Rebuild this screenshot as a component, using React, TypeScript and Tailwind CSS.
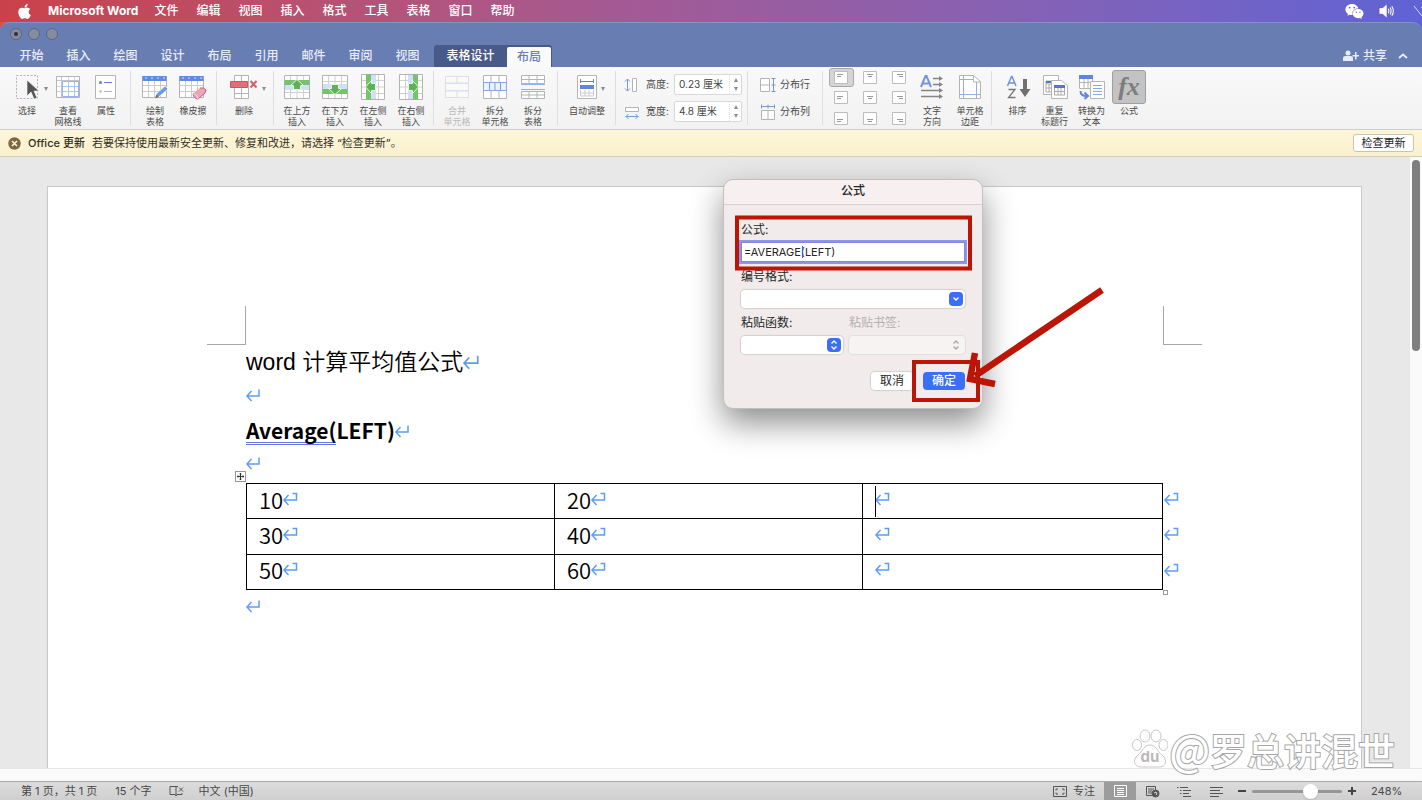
import type { ReactNode } from "react";
import { FaApple, FaWeixin } from "react-icons/fa";

const MENUS = ["文件", "编辑", "视图", "插入", "格式", "工具", "表格", "窗口", "帮助"];
const TABS = ["开始", "插入", "绘图", "设计", "布局", "引用", "邮件", "审阅", "视图"];
const ROWS = [
  ["10", "20", ""],
  ["30", "40", ""],
  ["50", "60", ""],
];

const LINE = "#b4b4b4";
const BLUE = "#7897d8";

/* ---------- Icons ---------- */

function Icon({ children, w = 26, h = 26 }: { children: ReactNode; w?: number; h?: number }) {
  return (
    <svg width={w} height={h} viewBox={`0 0 ${w} ${h}`} fill="none" stroke={LINE} aria-hidden="true">
      {children}
    </svg>
  );
}

function SelectIcon() {
  return (
    <Icon>
      <path d="M2.5 1.5h21v23h-21z" strokeDasharray="2 1.5" />
      <path d="M13 6v16l4-4 3 7 3-1-3-7h5z" fill="#555" stroke="#fff" strokeWidth=".6" />
    </Icon>
  );
}

function GridlinesIcon() {
  return (
    <Icon>
      <path d="M1.5 2.5h23v21h-23z" fill="#fff" />
      <path d="M8 12.5h16M8 17.5h16M13.5 8v15M19.5 8v15" stroke="#a9c5f2" />
      <path d="M13.5 3v4M19.5 3v4M2 12.500h5M2 17.500h5" stroke="#d8d8d8" />
      <path d="M6.500 3v20M2 6.500h22" stroke="#c4c4c4" />
      <path d="M7.500 7.500h16v15h-16z" stroke="#93b4ee" />
    </Icon>
  );
}

function PropertiesIcon() {
  return (
    <Icon>
      <path d="M2.5 1.5h20v23h-20z" fill="#fff" />
      <circle cx="7.500" cy="8.500" r="1.500" fill="#5c84d6" stroke="none" />
      <path d="M11 8.500h8" stroke="#5c84d6" />
      <circle cx="7.500" cy="17.500" r="1.300" fill="#bbb" stroke="none" />
      <path d="M11 17.500h8" />
    </Icon>
  );
}

function HeaderTable() {
  return (
    <>
      <path d="M.5 2.500h24v21H.5z" fill="#fff" />
      <path d="M6.500 6v17M12.500 6v17M18.500 6v17M1 11.500h23M1 17.500h23" stroke="#ccc" />
      <path d="M.5 2h24v5H.5z" fill="#5f8be0" stroke="none" />
      <path d="M3 4h2M9 4h2M15 4h2M21 4h2" stroke="#d6e3fb" />
    </>
  );
}

function DrawTableIcon() {
  return (
    <Icon>
      <HeaderTable />
      <path d="M13 24l2-5 8-7 3 3-8 7z" fill="#6b9be8" stroke="#fff" strokeWidth=".7" />
      <path d="M13 24.500l1.500-4 2.500 2.500z" fill="#6b6b6b" stroke="none" />
    </Icon>
  );
}

function EraserIcon() {
  return (
    <Icon w={28}>
      <HeaderTable />
      <path d="M14 20l7-6q4-1 6 2l-1 3-7 6q-4 0-5-5z" fill="#f0a2b6" stroke="#b8657f" />
      <path d="M14 20q4 0 5 5M15 19l6-5" stroke="#f9dbe3" />
    </Icon>
  );
}

function DeleteIcon() {
  return (
    <Icon w={28}>
      <path d="M4.500 1.500h14v23h-14zM11.500 2v22M5 19.500h13" fill="#fff" />
      <path d="M.5 7.500h17v6H.5z" fill="#de707a" stroke="#c35a66" />
      <path d="M20.500 7l6 6.500M26.500 7l-6 6.500" stroke="#d0606c" strokeWidth="2" />
    </Icon>
  );
}

function InsertIcon({ turn }: { turn: "up" | "down" | "left" | "right" }) {
  const rotation = { up: 0, right: 90, down: 180, left: -90 }[turn];
  return (
    <Icon>
      <g transform={`rotate(${rotation} 13 13)`}>
        <path d="M.5 1.500h25v23H.5z" fill="#fff" />
        <path d="M6.500 2v22M13 2v22M19.500 2v22M1 18.500h24" stroke="#d0d0d0" />
        <path d="M1 11h24v5H1z" fill="#cfe0f8" stroke="none" />
        <path d="M.5 6h25v5H.5z" fill="#76c36e" stroke="none" />
        <path d="M13 5.500l6.500 6h-3v4h-7v-4h-3z" fill="#5eb157" stroke="#e8f7e5" />
      </g>
    </Icon>
  );
}

function CellsIcon({ kind }: { kind: "merge" | "split" | "table" }) {
  if (kind === "merge") {
    return (
      <Icon>
        <path d="M1.500 2.500h23v21h-23zM1.500 9h23M1.500 17h23M13 3v6M13 17v6" stroke="#dedede" fill="#fafafa" />
        <path d="M1 9.500h24M1 16.500h24" stroke="#d2e2f8" />
      </Icon>
    );
  }
  if (kind === "split") {
    return (
      <Icon>
        <path d="M1.500 1.500h23v23h-23zM9 2v22M17 2v22" fill="#fff" />
        <path d="M1.500 8.500h23v8h-23z" fill="#eaf4ff" stroke="#83a7e8" />
        <path d="M7.500 9v7M13 9v7M18.500 9v7" stroke="#719be8" />
      </Icon>
    );
  }
  return (
    <Icon>
      <path d="M1.500 1.500h23v8h-23zM1.500 17.500h23v7h-23zM9 2v8M17 2v8M1 5.500h24M9 18v7M17 18v7M1 21h24" fill="#fff" />
      <path d="M1 10.500h24M1 15.500h24" stroke="#91b2ec" />
    </Icon>
  );
}

function AutofitIcon() {
  return (
    <Icon w={20}>
      <path d="M.5 1.500h19v23H.5z" fill="#fff" />
      <path d="M3.500 5v4M16.500 5v4M4 7.500h12" stroke="#5c88dc" />
      <path d="M3 11h14v4H3z" fill="#5c88dc" stroke="none" />
      <path d="M3.500 16v6h13v-6M8 16v6M12 16v6M4 19h12" stroke="#ccc" />
    </Icon>
  );
}

function MeasureIcon({ kind }: { kind: "height" | "width" | "rows" | "cols" }) {
  const art = {
    height: (
      <>
        <path d="M8.500 1.500h4v13h-4z" fill="#fff" />
        <path d="M3.500 2v12M1 4.500L3.500 2 6 4.500M1 11.500L3.500 14 6 11.500" stroke={BLUE} />
      </>
    ),
    width: (
      <>
        <path d="M1.500 3.500h13v4h-13z" fill="#fff" />
        <path d="M2 12.500h12M4.500 10L2 12.500 4.500 15M11.500 10l2.500 2.500-2.500 2.500" stroke={BLUE} />
      </>
    ),
    rows: (
      <>
        <path d="M.5 1.500h9v13h-9zM1 8h8" fill="#fff" />
        <path d="M13.500 1v14M11.500 1.500h4M11.500 8h4M11.500 14.500h4" stroke={BLUE} />
      </>
    ),
    cols: (
      <>
        <path d="M1.500 6.500h13v9h-13zM8 7v8" fill="#fff" />
        <path d="M1 2.500h14M1.500 .5v4M8 .5v4M14.500 .5v4" stroke={BLUE} />
      </>
    ),
  };
  return (
    <Icon w={16} h={16}>
      {art[kind]}
    </Icon>
  );
}

function AlignIcon({ row, col }: { row: number; col: number }) {
  const x = [3, 4, 5][col];
  const y = [3.5, 5.5, 7.5][row];
  return (
    <Icon w={14} h={13}>
      <path d="M.5 .5h13v12H.5z" fill="#fff" stroke="#bdbdbd" />
      <path d={`M${x} ${y}h6`} stroke="#999" />
      <path d={col === 2 ? "M7 0h4" : col === 1 ? "M5 0h4" : "M3 0h4"} transform={`translate(0 ${y + 2})`} stroke="#999" />
    </Icon>
  );
}

function TextDirectionIcon() {
  return (
    <Icon>
      <path d="M2 13L6.500 2h1L12 13M4 9.500h6" stroke="#7295dd" strokeWidth="2" />
      <path d="M14 4.500h8M14 10.500h8M2 16.500h20M2 22.500h20" stroke="#858585" strokeWidth="1.400" />
      <path d="M20 2l4 2.500L20 7zM20 8l4 2.500-4 2.500zM20 14l4 2.500-4 2.500zM20 20l4 2.500-4 2.500z" fill="#858585" stroke="none" />
    </Icon>
  );
}

function MarginIcon() {
  return (
    <Icon w={22}>
      <path d="M.5 1.500h14l7 6v17H.5z" fill="#fff" />
      <path d="M14.500 1.500v6.500h7" />
      <path d="M4.500 2v22M1 5.500h13M17.500 8v16M1 20.500h20" stroke="#8fb0ea" />
    </Icon>
  );
}

function SortIcon() {
  return (
    <Icon>
      <path d="M2.500 12L6.500 2.500h.5L11 12M4 9h6" stroke="#6d93de" strokeWidth="1.500" />
      <path d="M3.500 15.500h6.500l-6.500 8h7" stroke="#777" strokeWidth="1.300" />
      <path d="M18 5h4v10h3.500L20 23l-5.500-8H18z" fill="#707070" stroke="none" />
    </Icon>
  );
}

function RepeatHeaderIcon() {
  return (
    <Icon>
      <path d="M1.500 1.500h15v19h-15z" fill="#fff" />
      <path d="M4 7h11v3H4zM4 10v8h5M4 14h6M7 10v8" stroke="#aaa" />
      <path d="M4 7h8v2H4z" fill="#5279c4" stroke="none" />
      <path d="M9.500 6.500h10l6 5v13h-16z" fill="#fff" />
      <path d="M12.500 14v7h10v-7M16 14v7M19 14v7M12 17.500h10" stroke="#aaa" />
      <path d="M12 11h11v3H12z" fill="#5279c4" stroke="none" />
    </Icon>
  );
}

function ConvertIcon() {
  return (
    <Icon>
      <path d="M.5 2.500h13v12H.5zM1 8.500h12M5 5v9M9 5v9" fill="#fff" />
      <path d="M0 1h14v4H0z" fill="#5f86de" stroke="none" />
      <path d="M11.500 7.500h14v17h-14z" fill="#fff" />
      <path d="M14 11.500h9M14 14.500h9M14 17.500h9M14 20.500h9" stroke="#86a9e8" />
      <path d="M1.500 17q0 5 6 5M5.500 18.500L9 22l-3.500 3" stroke="#6287d8" strokeWidth="2" />
    </Icon>
  );
}

function FormulaIcon() {
  return (
    <span className="-my-1 flex h-[34px] w-[34px] items-center justify-center rounded-[3px] border border-[#9f9f9f] bg-[#c3c3c3]">
      <span className="font-['Liberation_Serif',serif] text-[26px] leading-7 font-bold text-[#7d7d7d] italic">fx</span>
    </span>
  );
}

function ReturnMark({ hook = false, large = false }: { hook?: boolean; large?: boolean }) {
  return (
    <svg
      width={large ? 17 : 15}
      height={large ? 16 : 14}
      viewBox="0 0 15 14"
      fill="none"
      stroke="#5d9cf5"
      strokeWidth="1.500"
      aria-hidden="true"
    >
      <path d={hook ? "M9.500 1.500h4v6.500H1M5.500 3L1 8l4.500 5" : "M13 1.500V8H1M5.500 3L1 8l4.500 5"} />
    </svg>
  );
}

function Caret() {
  return <span className="block h-0 w-0 border-x-2 border-t-4 border-x-transparent border-t-[#8b8b8b]" />;
}

/* ---------- Ribbon ---------- */

function Group({ children, className = "" }: { children: ReactNode; className?: string }) {
  return (
    <div className={`relative flex shrink-0 after:absolute after:top-1 after:right-0 after:bottom-1 after:w-px after:bg-[#dedede] ${className}`}>
      {children}
    </div>
  );
}

function RibbonButton({
  icon,
  lines,
  caret = false,
  muted = false,
  className = "w-[38px]",
}: {
  icon: ReactNode;
  lines: string[];
  caret?: boolean;
  muted?: boolean;
  className?: string;
}) {
  return (
    <button
      type="button"
      disabled={muted}
      className={`flex shrink-0 flex-col items-center gap-[5px] pt-[7px] pb-[2px] ${muted ? "text-[#b8b8b8]" : "text-[#4a4a4a]"} ${className}`}
    >
      <span className="relative flex h-[26px] items-center">
        {icon}
        {caret && (
          <span className="absolute top-1/2 -right-2">
            <Caret />
          </span>
        )}
      </span>
      <span className="h-[22px] text-[9px] leading-[11px] whitespace-nowrap">
        {lines.map((line) => (
          <span key={line} className="block">
            {line}
          </span>
        ))}
      </span>
    </button>
  );
}

function SizeField({ id, label, value, kind }: { id: string; label: string; value: string; kind: "height" | "width" }) {
  return (
    <div className="flex items-center">
      <MeasureIcon kind={kind} />
      <label htmlFor={id} className="ml-[6px] w-[28px] text-[10px] text-[#4a4a4a]">
        {label}:
      </label>
      <div className="flex h-[21px] items-center rounded-[2px] border border-[#d8d8d8] bg-white">
        <input id={id} defaultValue={value} className="w-[54px] pl-1 text-[10px] text-[#444] outline-none" />
        <span className="flex h-full w-3 flex-col items-center justify-center gap-[5px] border-l border-dotted border-[#ddd]">
          <span className="rotate-180">
            <Caret />
          </span>
          <Caret />
        </span>
      </div>
    </div>
  );
}

function Ribbon() {
  return (
    <div className="flex overflow-hidden border-b border-[#cfcfcf] bg-linear-to-b from-[#f9f9f9] to-[#f2f2f2]">
      <Group className="pr-[6px] pl-[5px]">
        <RibbonButton icon={<SelectIcon />} lines={["选择"]} caret className="w-[44px]" />
        <RibbonButton icon={<GridlinesIcon />} lines={["查看", "网格线"]} />
        <RibbonButton icon={<PropertiesIcon />} lines={["属性"]} />
      </Group>
      <Group className="px-[5px]">
        <RibbonButton icon={<DrawTableIcon />} lines={["绘制", "表格"]} />
        <RibbonButton icon={<EraserIcon />} lines={["橡皮擦"]} />
      </Group>
      <Group className="pr-[11px] pl-2">
        <RibbonButton icon={<DeleteIcon />} lines={["删除"]} caret />
      </Group>
      <Group className="px-1">
        <RibbonButton icon={<InsertIcon turn="up" />} lines={["在上方", "插入"]} />
        <RibbonButton icon={<InsertIcon turn="down" />} lines={["在下方", "插入"]} />
        <RibbonButton icon={<InsertIcon turn="left" />} lines={["在左侧", "插入"]} />
        <RibbonButton icon={<InsertIcon turn="right" />} lines={["在右侧", "插入"]} />
      </Group>
      <Group className="pr-[6px] pl-1">
        <RibbonButton icon={<CellsIcon kind="merge" />} lines={["合并", "单元格"]} muted />
        <RibbonButton icon={<CellsIcon kind="split" />} lines={["拆分", "单元格"]} />
        <RibbonButton icon={<CellsIcon kind="table" />} lines={["拆分", "表格"]} />
      </Group>
      <Group className="px-1">
        <RibbonButton icon={<AutofitIcon />} lines={["自动调整"]} caret className="w-[50px]" />
      </Group>
      <Group className="flex-col justify-center gap-[6px] pr-[6px] pl-[8px]">
        <SizeField id="cell-height" label="高度" value="0.23 厘米" kind="height" />
        <SizeField id="cell-width" label="宽度" value="4.8 厘米" kind="width" />
      </Group>
      <Group className="flex-col justify-center gap-[11px] pr-[13px] pl-[12px] text-[10px] text-[#4a4a4a]">
        <button type="button" className="flex h-4 items-center gap-1">
          <MeasureIcon kind="rows" />
          分布行
        </button>
        <button type="button" className="flex h-4 items-center gap-1">
          <MeasureIcon kind="cols" />
          分布列
        </button>
      </Group>
      <Group className="pr-[3px] pl-1">
        <div className="grid w-[86px] grid-cols-3 grid-rows-3">
          {[0, 1, 2].map((row) =>
            [0, 1, 2].map((col) => (
              <button
                key={`${row}-${col}`}
                type="button"
                aria-label={`对齐 ${row + 1}-${col + 1}`}
                className={`flex h-[19px] w-[25px] items-center justify-center place-self-center rounded-[3px] border ${
                  row + col === 0 ? "border-[#a9a9a9] bg-[#d5d5d5]" : "border-transparent"
                }`}
              >
                <AlignIcon row={row} col={col} />
              </button>
            )),
          )}
        </div>
        <RibbonButton icon={<TextDirectionIcon />} lines={["文字", "方向"]} />
        <RibbonButton icon={<MarginIcon />} lines={["单元格", "边距"]} />
      </Group>
      <div className="flex pl-[7px]">
        <RibbonButton icon={<SortIcon />} lines={["排序"]} className="w-[37px]" />
        <RibbonButton icon={<RepeatHeaderIcon />} lines={["重复", "标题行"]} className="w-[37px]" />
        <RibbonButton icon={<ConvertIcon />} lines={["转换为", "文本"]} className="w-[37px]" />
        <RibbonButton icon={<FormulaIcon />} lines={["公式"]} />
      </div>
    </div>
  );
}

/* ---------- Window chrome ---------- */

function MenuBar() {
  return (
    <nav className="flex h-[22px] items-center overflow-hidden bg-linear-to-r from-[#cb4149] via-[#a35a96] via-45% to-[#6063d4] pl-[16px] text-xs text-white">
      <button type="button" aria-label="Apple" className="mr-[15px]">
        <FaApple size={17} />
      </button>
      <button type="button" className="mr-[7px] font-bold whitespace-nowrap">
        Microsoft Word
      </button>
      {MENUS.map((name) => (
        <button key={name} type="button" className="w-[42px] shrink-0 font-medium">
          {name}
        </button>
      ))}
      <div className="ml-auto flex items-center gap-[14px]">
        <FaWeixin size={19} />
        <svg width="18" height="14" viewBox="0 0 20 16" fill="none" stroke="#fff" strokeWidth="1.200" aria-hidden="true">
          <path d="M2 5.500h3L9 2v12l-4-3.500H2z" fill="#fff" />
          <path d="M11.500 5.500q1.500 2.500 0 5M13.500 4q2.500 4 0 8M15.500 2.500q3.500 5.500 0 11" />
        </svg>
        <svg width="12" height="14" viewBox="0 0 12 14" fill="none" stroke="#d8d8f6" aria-hidden="true">
          <path d="M4 2l8 10M11 4l2-2" />
        </svg>
      </div>
    </nav>
  );
}

function TitleBar() {
  return (
    <header className="rounded-t-[9px] border-t border-[#8293c4] bg-[#687db2]">
      <div className="flex h-[22px] items-center gap-[6px] pl-[10px]">
        <span className="flex size-3 items-center justify-center rounded-full border border-[#5c667f] bg-[#858c9f]">
          <span className="size-1 rounded-full bg-[#2b3040]" />
        </span>
        <span className="size-3 rounded-full border border-[#5c667f] bg-[#858c9f]" />
        <span className="size-3 rounded-full border border-[#5c667f] bg-[#858c9f]" />
      </div>
      <div className="flex h-[22px] items-stretch pl-[8px] text-xs font-medium text-[#e8ecf7]">
        {TABS.map((name, i) => (
          <button key={i} type="button" className="w-[47px] shrink-0">
            {name}
          </button>
        ))}
        <div className="ml-[3px] flex shrink-0 rounded-t-[3px] bg-[#485a89] pr-[1px]">
          <button type="button" className="w-[73px] text-white">
            表格设计
          </button>
          <button type="button" className="mt-[2px] w-[44px] rounded-t-[2px] bg-[#fafafa] text-[#687db2]">
            布局
          </button>
        </div>
        <div className="ml-auto flex items-center gap-[11px] pr-[14px]">
          <button type="button" className="flex items-center gap-1">
            <svg width="16" height="12" viewBox="0 0 16 12" fill="currentColor" aria-hidden="true">
              <circle cx="5" cy="3" r="2.500" />
              <path d="M0 11V8q0-2 2.500-2h5Q10 6 10 8v3zM12 2h1.500v3H16v1.500h-2.500v3H12v-3H9.500V5H12z" />
            </svg>
            共享
          </button>
          <button type="button" aria-label="折叠功能区">
            <svg width="10" height="6" viewBox="0 0 10 6" fill="none" stroke="currentColor" strokeWidth="1.800">
              <path d="M1 5l4-3.500L9 5" />
            </svg>
          </button>
        </div>
      </div>
    </header>
  );
}

function UpdateBar() {
  return (
    <div className="flex h-[27px] items-center border-b border-[#d6cfae] bg-linear-to-b from-[#fdf6d8] to-[#f9f0cd] px-2 text-[11px] text-[#33301f]">
      <button type="button" aria-label="关闭">
        <svg width="13" height="13" viewBox="0 0 13 13" aria-hidden="true">
          <circle cx="6.500" cy="6.500" r="6.200" fill="#7d6842" />
          <path d="M4 4l5 5M9 4L4 9" stroke="#fff6d8" strokeWidth="1.600" />
        </svg>
      </button>
      <strong className="mr-[7px] ml-[7px] font-medium">Office 更新</strong>
      <span>若要保持使用最新安全更新、修复和改进，请选择 “检查更新”。</span>
      <button type="button" className="ml-auto h-[18px] w-[61px] rounded-[3px] border border-[#c9c3ab] bg-white text-[#222]">
        检查更新
      </button>
    </div>
  );
}

/* ---------- Document ---------- */

function DocumentPage() {
  return (
    <article className="min-w-0 flex-1 border-x border-t border-[#c9c9c9] bg-white pt-[119px] font-['Noto_Sans_CJK_SC',sans-serif] text-black">
      <div className="flex justify-between px-[159px]">
        <span className="size-[39px] border-r border-b border-[#a8a8a8]" />
        <span className="size-[39px] border-b border-l border-[#a8a8a8]" />
      </div>
      <div className="px-[198px]">
        <p className="flex h-[34px] items-center font-['Liberation_Sans','Noto_Sans_CJK_SC',sans-serif] text-[23px] leading-[30px] font-[350]">
          word 计算平均值公式
          <ReturnMark large />
        </p>
        <p className="flex h-8 items-center">
          <ReturnMark />
        </p>
        <h2 className="flex h-10 items-center text-[21px] leading-[26px] font-bold">
          <span className="h-7 border-b-3 border-double border-[#6a72e0]">Average(</span>
          <span className="h-7">LEFT)</span>
          <ReturnMark />
        </h2>
        <p className="flex h-8 items-start pt-[5px]">
          <ReturnMark />
        </p>
        <div className="relative">
          <span className="absolute -top-3 -left-[11px] flex size-[11px] items-center justify-center border border-[#999] bg-white">
            <svg width="9" height="9" viewBox="0 0 9 9" stroke="#333" fill="none" aria-hidden="true">
              <path d="M4.500 1v7M1 4.500h7M3.500 2h2M3.500 7h2M2 3.500v2M7 3.500v2" />
            </svg>
          </span>
          <table className="h-[107px] w-full table-fixed border-collapse text-[22px] font-[350]">
            <colgroup>
              <col className="w-[308px]" />
              <col className="w-[308px]" />
              <col />
            </colgroup>
            <tbody>
              {ROWS.map((cells, r) => (
                <tr key={r}>
                  {cells.map((cell, c) => (
                    <td key={c} className="relative border border-black p-0 pl-3">
                      <span className="flex h-[34px] items-center pb-[5px] leading-7">
                        {r === 0 && c === 2 && <span className="absolute top-[2px] h-[31px] w-px bg-black" />}
                        {cell}
                        <ReturnMark hook />
                      </span>
                      {c === 2 && (
                        <span className="absolute top-2 -right-[17px]">
                          <ReturnMark hook />
                        </span>
                      )}
                    </td>
                  ))}
                </tr>
              ))}
            </tbody>
          </table>
          <span className="absolute -right-[5px] -bottom-[5px] size-[5px] border border-[#999] bg-white" />
        </div>
        <p className="flex h-8 items-center">
          <ReturnMark />
        </p>
      </div>
    </article>
  );
}

/* ---------- Formula dialog ---------- */

function Stepper({ active = false }: { active?: boolean }) {
  return (
    <span
      className={`pointer-events-none absolute top-[2px] right-[2px] flex size-[14px] items-center justify-center rounded-[4px] ${
        active ? "bg-[#3b6df6] text-white" : "text-[#a9a9a9]"
      }`}
    >
      <svg width="8" height="12" viewBox="0 0 8 12" fill="none" stroke="currentColor" strokeWidth="1.400" aria-hidden="true">
        <path d="M1.500 4.500L4 2l2.500 2.500M1.500 7.500L4 10l2.500-2.500" />
      </svg>
    </span>
  );
}

function FormulaDialog() {
  return (
    <section
      role="dialog"
      aria-label="公式"
      className="absolute top-[22px] left-[723px] w-[260px] rounded-[10px] border border-[#c4bebe] bg-[#f1ebeb] text-xs leading-4 text-[#262626] shadow-[0_14px_32px_rgba(0,0,0,0.45)]"
    >
      <h1 className="rounded-t-[10px] border-b border-[#d8d0d0] bg-[#f8f0f0] pt-[3px] pb-[5px] text-center font-medium">公式</h1>
      <form className="px-[17px] pt-[17px] pb-[18px]" onSubmit={(e) => e.preventDefault()}>
        <label htmlFor="formula" className="block">
          公式:
        </label>
        <div className="relative mt-1">
          <input
            id="formula"
            defaultValue="=AVERAGE(LEFT)"
            className="block h-5 w-full border border-[#8085dd] bg-white pl-[2px] text-[11px] ring-2 ring-[#9295e3] outline-none"
          />
          <span className="absolute top-1 left-[61px] h-3 w-px bg-[#3a61e8]" />
        </div>
        <label htmlFor="format" className="mt-[7px] block">
          编号格式:
        </label>
        <div className="relative mt-[5px]">
          <select id="format" className="block h-[18px] w-full appearance-none rounded-[4px] bg-white shadow-[0_0_1px_1px_rgba(0,0,0,0.12)]" />
          <span className="pointer-events-none absolute top-[2px] right-[2px] flex size-[14px] items-center justify-center rounded-[4px] bg-[#3b6df6]">
            <svg width="8" height="6" viewBox="0 0 8 6" fill="none" stroke="#fff" strokeWidth="1.400" aria-hidden="true">
              <path d="M1.500 1.500L4 4l2.500-2.500" />
            </svg>
          </span>
        </div>
        <div className="mt-[7px] flex gap-[6px]">
          <div className="w-[102px]">
            <label htmlFor="paste-fn" className="block">
              粘贴函数:
            </label>
            <div className="relative mt-[5px]">
              <select id="paste-fn" className="block h-[18px] w-full appearance-none rounded-[4px] bg-white shadow-[0_0_1px_1px_rgba(0,0,0,0.12)]" />
              <Stepper active />
            </div>
          </div>
          <div className="flex-1">
            <label htmlFor="bookmark" className="block text-[#b5b0b0]">
              粘贴书签:
            </label>
            <div className="relative mt-[5px]">
              <select id="bookmark" disabled className="block h-[18px] w-full appearance-none rounded-[4px] bg-[#f6f3f3] shadow-[0_0_1px_1px_rgba(0,0,0,0.06)]" />
              <Stepper />
            </div>
          </div>
        </div>
        <div className="mt-[18px] flex justify-end gap-[10px] font-medium">
          <button type="button" className="h-[18px] w-[42px] rounded-[4px] bg-white font-normal shadow-[0_0_1px_1px_rgba(0,0,0,0.12)]">
            取消
          </button>
          <button type="submit" className="h-[18px] w-[42px] rounded-[4px] bg-[#3d6ef8] text-white">
            确定
          </button>
        </div>
      </form>
      {/* Hand-drawn highlights */}
      <svg className="pointer-events-none absolute -top-px -left-px overflow-visible" width="260" height="229" fill="none" stroke="#bb1506" strokeWidth="4" aria-hidden="true">
        <path d="M14 38.500h233v51H14zM191 183h64v38h-64z" />
        <path d="M379 111L252 197M252 174l-5 26 25 5" strokeWidth="6.500" />
      </svg>
    </section>
  );
}

function Watermark() {
  return (
    <div className="pointer-events-none absolute right-[27px] bottom-[7px] flex items-center gap-px">
      <svg width="36" height="40" viewBox="0 0 36 40" fill="#fff" stroke="#c8c8c8" aria-hidden="true">
        <ellipse cx="13" cy="7" rx="5" ry="6" />
        <ellipse cx="24" cy="7" rx="5" ry="6" />
        <ellipse cx="5" cy="16" rx="4.500" ry="5.500" />
        <ellipse cx="31.500" cy="16" rx="4.500" ry="5.500" />
        <path d="M18 16c6 0 7 6 12 10 6 5 4 12-3 12H9C2 38 0 31 6 26c5-4 6-10 12-10z" />
        <text x="18" y="33" textAnchor="middle" fontSize="15" fontWeight="700" fill="#b9b9b9" stroke="none" fontFamily="Inter, sans-serif">
          du
        </text>
      </svg>
      <span className="font-['Noto_Sans_CJK_SC',sans-serif] text-[37px] leading-[48px] font-medium whitespace-nowrap text-white [-webkit-text-stroke:2px_#a6a6a6] [paint-order:stroke_fill]">
        <span className="text-[42px]">@</span>罗总讲混世
      </span>
    </div>
  );
}

function StatusBar() {
  return (
    <footer className="flex h-[19px] shrink-0 items-center border-t border-[#a9a9a9] bg-linear-to-b from-[#dcdcdc] to-[#cfcfcf] pr-[20px] pl-[21px] text-[11px] text-[#484848]">
      <span className="mr-[18px]">第 1 页，共 1 页</span>
      <span className="mr-[17px]">15 个字</span>
      <svg width="15" height="12" viewBox="0 0 15 12" fill="none" stroke="#555" className="mr-[15px]" aria-hidden="true">
        <path d="M9 1.500H1v8h5l1 1.500V2M7 11l1-1.500h5V8M10 2.500l4 4M14 2.500l-4 4" />
      </svg>
      <span>中文 (中国)</span>
      <div className="ml-auto flex h-full items-center">
        <button type="button" className="flex items-center gap-[6px]">
          <svg width="14" height="11" viewBox="0 0 14 11" fill="none" stroke="#555" aria-hidden="true">
            <path d="M.5 .5h13v10H.5z" />
            <path d="M3 4.500V3h2M9 3h2v1.500M11 6.500V8H9M5 8H3V6.500" />
          </svg>
          专注
        </button>
        <button type="button" aria-label="页面视图" className="ml-[9px] flex h-full w-8 items-center justify-center bg-[#9c9c9c]">
          <svg width="13" height="12" viewBox="0 0 13 12" fill="none" stroke="#fff" aria-hidden="true">
            <path d="M.5 .5h12v11H.5zM3 3.500h7M3 5.500h7M3 7.500h7M3 9.500h7" />
          </svg>
        </button>
        <button type="button" aria-label="Web 版式" className="flex w-8 justify-center">
          <svg width="15" height="13" viewBox="0 0 15 13" fill="none" stroke="#555" aria-hidden="true">
            <path d="M7 10.500H1.500v-9h9V5M3 4h6M3 6h4M3 8h4" />
            <circle cx="10.500" cy="8.500" r="3.500" fill="#555" />
            <path d="M9 8l2-1 1 2-1 1" stroke="#ddd" />
          </svg>
        </button>
        <button type="button" aria-label="大纲" className="flex w-8 justify-center">
          <svg width="14" height="11" viewBox="0 0 14 11" fill="none" stroke="#555" aria-hidden="true">
            <path d="M0 1.500h1.500M3 1.500h8M3 4.500h1.500M6 4.500h8M3 7.500h1.500M6 7.500h6M6 10.500h8" />
          </svg>
        </button>
        <button type="button" aria-label="草稿" className="flex w-8 justify-center">
          <svg width="13" height="11" viewBox="0 0 13 11" fill="none" stroke="#555" aria-hidden="true">
            <path d="M0 1.500h13M0 4.500h10M0 7.500h13M0 10.500h9" />
          </svg>
        </button>
        <button type="button" aria-label="缩小" className="ml-[6px] h-[2px] w-2 bg-[#444]" />
        <input
          type="range"
          aria-label="缩放"
          min={10}
          max={500}
          defaultValue={345}
          className="mx-[6px] h-[3px] w-[90px] appearance-none rounded-full bg-[#979797] [&::-webkit-slider-thumb]:size-[15px] [&::-webkit-slider-thumb]:appearance-none [&::-webkit-slider-thumb]:rounded-full [&::-webkit-slider-thumb]:bg-white [&::-webkit-slider-thumb]:shadow"
        />
        <button type="button" aria-label="放大">
          <svg width="8" height="8" viewBox="0 0 8 8" stroke="#444" strokeWidth="2" aria-hidden="true">
            <path d="M4 0v8M0 4h8" />
          </svg>
        </button>
        <span className="ml-[15px] w-[31px]">248%</span>
      </div>
    </footer>
  );
}

export default function App() {
  return (
    <div className="flex h-screen flex-col overflow-hidden bg-[#dedede] font-['Inter','Noto_Sans_CJK_SC',sans-serif]">
      <MenuBar />
      <div className="bg-linear-to-r from-[#d6533f] to-[#6063d4]">
        <TitleBar />
      </div>
      <Ribbon />
      <UpdateBar />
      <main className="relative flex min-h-0 flex-1 flex-col">
        <div className="flex min-h-0 flex-1 bg-[#e8e8e8]">
          <div className="flex min-w-0 flex-1 overflow-hidden pt-[29px] pr-[48px] pl-[47px]">
            <DocumentPage />
          </div>
          <div className="w-3 bg-[#fafafa] px-[2px] pt-[3px]">
            <div className="h-[191px] rounded-full bg-[#7f7f7f]" />
          </div>
        </div>
        <div className="h-[13px] shrink-0 border-t border-[#e6e6e6] bg-[#fafafa]" />
        <FormulaDialog />
        <Watermark />
      </main>
      <StatusBar />
    </div>
  );
}
